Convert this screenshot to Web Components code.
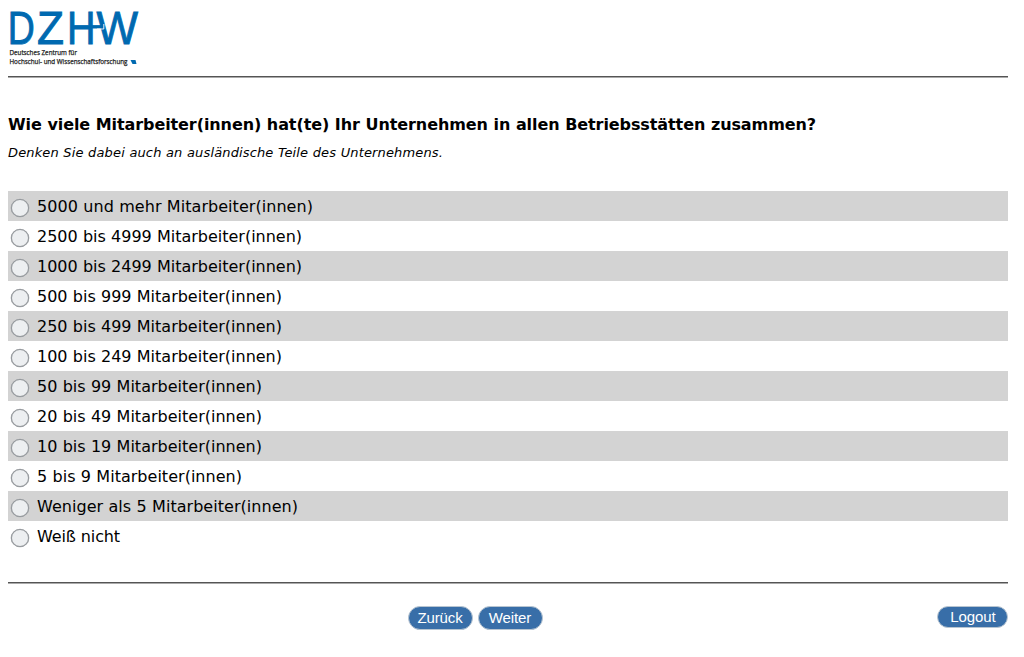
<!DOCTYPE html>
<html lang="de"><head><meta charset="utf-8"><title>DZHW</title>
<style>body{margin:0;background:#fff;color:#000;font-family:Verdana,"DejaVu Sans",sans-serif}</style></head>
<body><survey-page></survey-page>
<script>
const define=(name,html,init)=>customElements.define(name,class extends HTMLElement{
 connectedCallback(){ if(this.shadowRoot)return; const t=document.createElement('template');t.innerHTML=html;
 this.attachShadow({mode:'open'}).append(t.content.cloneNode(true)); if(init)init(this); }});
define('dzhw-logo',`<style>:host{display:block;width:150px;height:76px}svg{display:block}.s{font:6.6px "Open Sans",sans-serif;fill:#222;stroke:#222;stroke-width:.25}.b{font:47px "Liberation Sans",sans-serif;fill:#0069b0;stroke:#0069b0;stroke-width:.9}</style>
<svg width="150" height="76">
<text class="b" y="44" x="7.8" textLength="27" lengthAdjust="spacingAndGlyphs">D</text>
<text class="b" y="44" x="37" textLength="27" lengthAdjust="spacingAndGlyphs">Z</text>
<text class="b" y="44" x="67" textLength="28.5" lengthAdjust="spacingAndGlyphs">H</text>
<text class="b" y="44" x="96.5" textLength="41.5" lengthAdjust="spacingAndGlyphs">W</text>
<path d="M90 26.8h12" stroke="#0069b0" stroke-width="3.4"/><path d="M97 29h6.8v-5" fill="none" stroke="#fff" stroke-width=".9"/>
<text class="s" x="9.5" y="55" textLength="67.5" lengthAdjust="spacingAndGlyphs">Deutsches Zentrum für</text>
<text class="s" x="9.5" y="64" textLength="118" lengthAdjust="spacingAndGlyphs">Hochschul- und Wissenschaftsforschung</text>
<path d="M130.5 60h5l1 4h-4z" fill="#0069b0"/></svg>`);
define('page-rule',`<style>:host{display:block;height:2px;background:linear-gradient(#555 50%,#aaa 50%);margin:0 16px 0 8px}</style>`);
define('survey-question',`<style>:host{display:block;padding:37px 8px 0}h1{margin:0;font-size:16px;line-height:20px;white-space:nowrap}p{margin:10px 0 0;font-size:13px;line-height:16px;font-style:italic;white-space:nowrap}</style><h1><fit-text w="808"><slot name="title"></slot></fit-text></h1><p><fit-text w="435"><slot name="hint"></slot></fit-text></p>`);
define('fit-text',`<style>:host{display:inline-block;white-space:nowrap}</style><slot></slot>`,e=>{
 const nodes=e.shadowRoot.querySelector('slot').assignedNodes({flatten:true});
 const n=nodes.map(x=>x.textContent).join('').trim().length;
 e.style.wordSpacing='.2px';
 e.style.letterSpacing=(+e.getAttribute('w')-e.getBoundingClientRect().width)/n+'px';});
define('answer-option',`<style>:host{display:flex;height:30px;align-items:flex-start;box-sizing:border-box;padding-left:3px;font-size:16px}:host(:nth-of-type(odd)){background:#d3d3d3}
i{width:18px;height:18px;box-sizing:border-box;border:1px solid #92969a;border-radius:50%;background:#edeff1;margin:8px 8px 0 0;flex:none;box-shadow:0 0 0 .3px #a5a8ab}span{line-height:20px;margin-top:6px}</style><i></i><span><slot></slot></span>`);
define('pill-button',`<style>:host{display:block;box-sizing:border-box;width:65px;height:24px;border:1px solid #b8c5d1;border-radius:12px;background:#386ea8;color:#fff;font:15px/22px "Liberation Sans",Arial,sans-serif;text-align:center;letter-spacing:-.1px;padding-right:1px}:host([small]){width:71px;height:22px;line-height:20px;padding:0 0 0 1px}</style><slot></slot>`);
const rows=[['5000 und mehr Mitarbeiter(innen)',276],['2500 bis 4999 Mitarbeiter(innen)',265],['1000 bis 2499 Mitarbeiter(innen)',265],['500 bis 999 Mitarbeiter(innen)',245],['250 bis 499 Mitarbeiter(innen)',245],['100 bis 249 Mitarbeiter(innen)',245],['50 bis 99 Mitarbeiter(innen)',225],['20 bis 49 Mitarbeiter(innen)',225],['10 bis 19 Mitarbeiter(innen)',225],['5 bis 9 Mitarbeiter(innen)',205],['Weniger als 5 Mitarbeiter(innen)',261],['Weiß nicht',83]];
define('survey-page',`<style>:host{display:block}main{padding:30px 16px 31px 8px}footer{display:grid;grid-template-columns:400px 65px 70px 1fr;column-gap:0;padding:22px 16px 0 8px}footer :nth-child(1){grid-column:2}footer :nth-child(2){margin-left:5px}footer :nth-child(3){justify-self:end}</style>
<dzhw-logo></dzhw-logo><page-rule></page-rule>
<survey-question><span slot="title">Wie viele Mitarbeiter(innen) hat(te) Ihr Unternehmen in allen Betriebsstätten zusammen?</span><span slot="hint">Denken Sie dabei auch an ausländische Teile des Unternehmens.</span></survey-question>
<main>${rows.map(r=>`<answer-option><fit-text w="${r[1]}">${r[0]}</fit-text></answer-option>`).join('')}</main>
<page-rule></page-rule><footer><pill-button>Zurück</pill-button><pill-button>Weiter</pill-button><pill-button small>Logout</pill-button></footer>`);
</script></body></html>
